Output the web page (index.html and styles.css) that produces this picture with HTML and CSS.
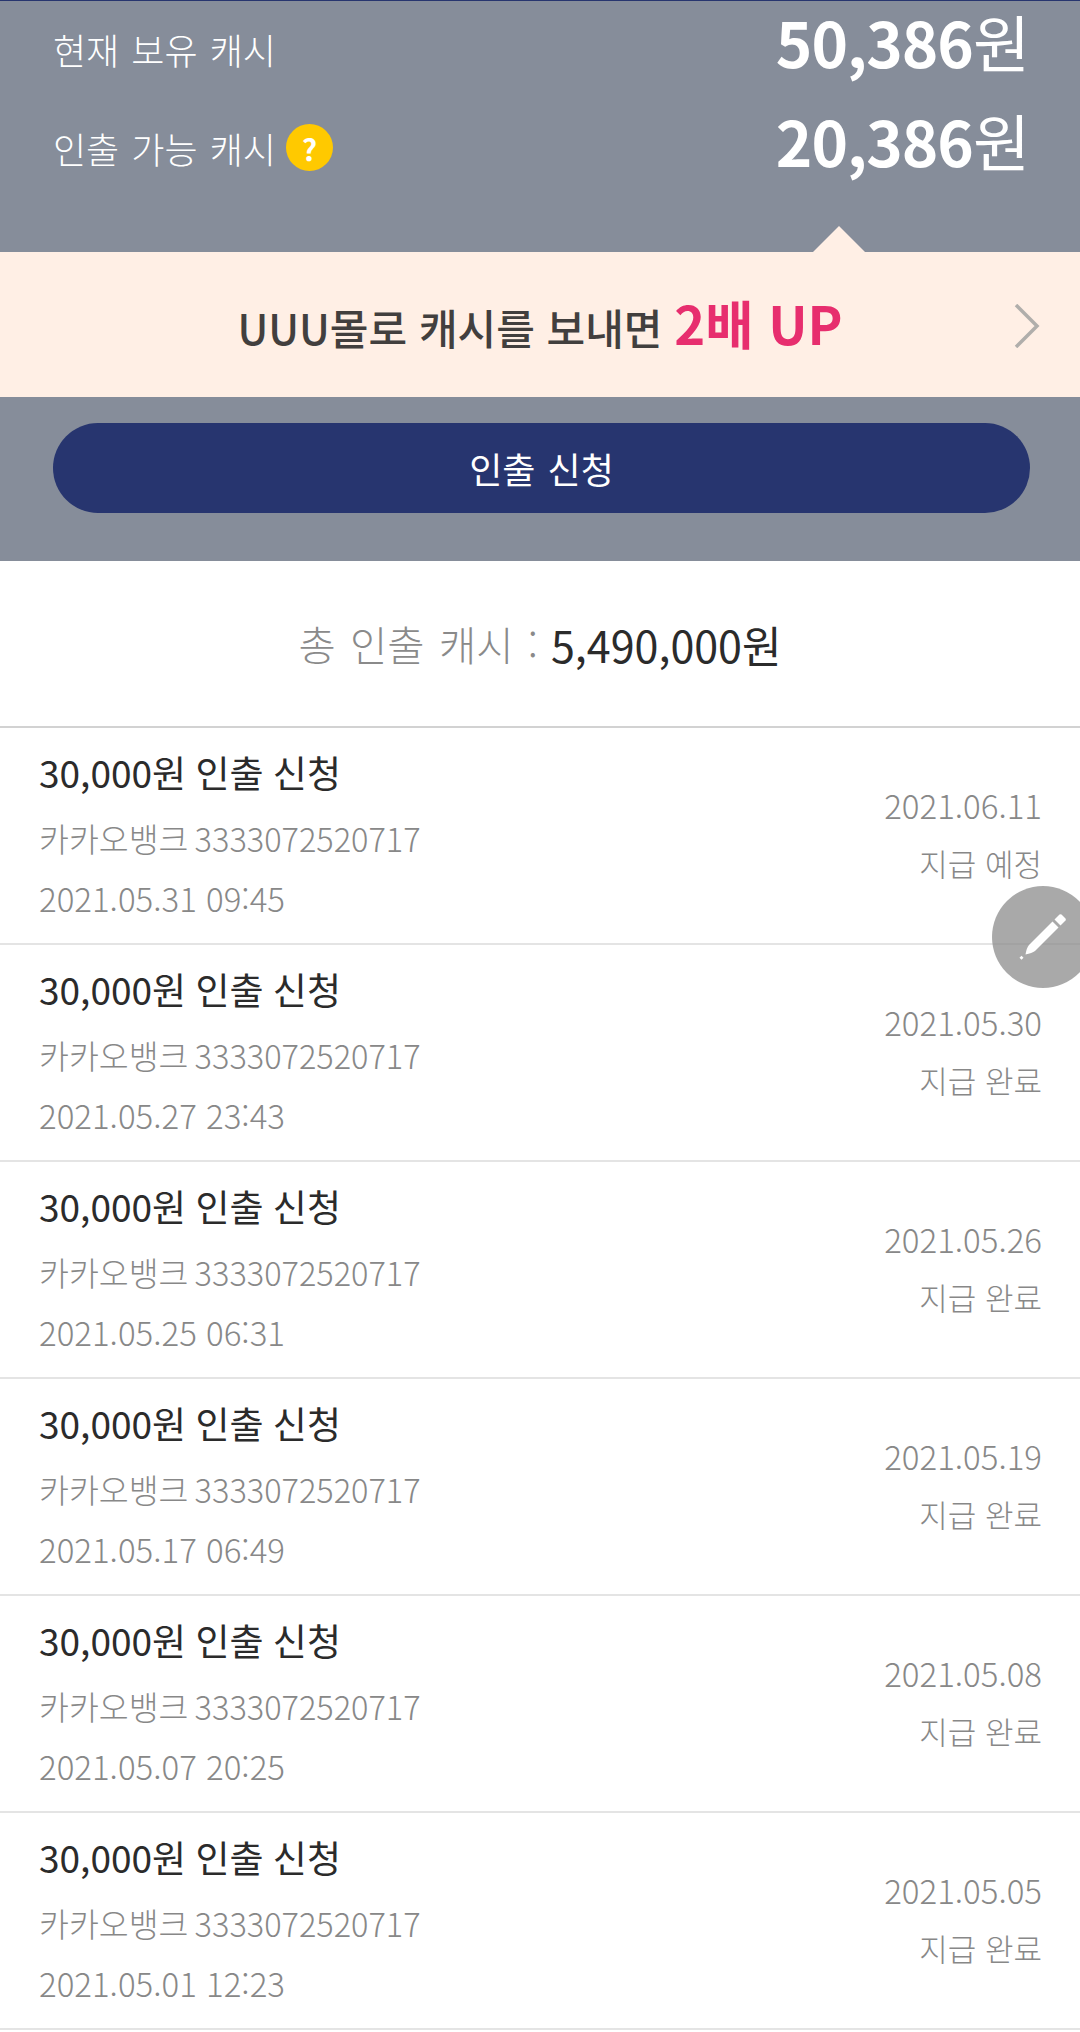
FILE: index.html
```html
<!DOCTYPE html>
<html lang="ko">
<head>
    <meta charset="UTF-8">
    <meta name="viewport" content="width=device-width, initial-scale=1.0">
    <title>인출 신청</title>
    <link rel="stylesheet" href="styles.css">
</head>
<body>

    <!-- Cash summary -->
    <section class="summary">
        <div class="balance-row">
            <span class="balance-label">현재 보유 캐시</span>
            <strong class="balance-value">50,386<span class="won">원</span></strong>
        </div>
        <div class="balance-row">
            <span class="balance-label">인출 가능 캐시 <span class="help">?</span></span>
            <strong class="balance-value">20,386<span class="won">원</span></strong>
        </div>
    </section>

    <!-- Promo banner -->
    <a class="promo">
        <span class="promo-text">UUU몰로 캐시를 보내면 <em>2배 UP</em></span>
        <svg class="promo-arrow" width="26" height="44" viewBox="0 0 26 44">
            <path d="M2 1 L23 22 L2 43" fill="none" stroke="#b0aeab" stroke-width="3.500"/>
        </svg>
    </a>

    <div class="request-bar">
        <button class="request-button">인출 신청</button>
    </div>

    <div class="total">총 인출 캐시 : <strong>5,490,000원</strong></div>

    <!-- Withdrawal list -->
    <ul class="history">
        <li class="history-item">
            <div class="history-main">
                <p class="history-title">30,000원 인출 신청</p>
                <p class="history-bank">카카오뱅크 3333072520717</p>
                <p class="history-time">2021.05.31 09:45</p>
            </div>
            <div class="history-side">
                <p>2021.06.11</p>
                <p class="history-status">지급 예정</p>
            </div>
        </li>
        <li class="history-item">
            <div class="history-main">
                <p class="history-title">30,000원 인출 신청</p>
                <p class="history-bank">카카오뱅크 3333072520717</p>
                <p class="history-time">2021.05.27 23:43</p>
            </div>
            <div class="history-side">
                <p>2021.05.30</p>
                <p class="history-status">지급 완료</p>
            </div>
        </li>
        <li class="history-item">
            <div class="history-main">
                <p class="history-title">30,000원 인출 신청</p>
                <p class="history-bank">카카오뱅크 3333072520717</p>
                <p class="history-time">2021.05.25 06:31</p>
            </div>
            <div class="history-side">
                <p>2021.05.26</p>
                <p class="history-status">지급 완료</p>
            </div>
        </li>
        <li class="history-item">
            <div class="history-main">
                <p class="history-title">30,000원 인출 신청</p>
                <p class="history-bank">카카오뱅크 3333072520717</p>
                <p class="history-time">2021.05.17 06:49</p>
            </div>
            <div class="history-side">
                <p>2021.05.19</p>
                <p class="history-status">지급 완료</p>
            </div>
        </li>
        <li class="history-item">
            <div class="history-main">
                <p class="history-title">30,000원 인출 신청</p>
                <p class="history-bank">카카오뱅크 3333072520717</p>
                <p class="history-time">2021.05.07 20:25</p>
            </div>
            <div class="history-side">
                <p>2021.05.08</p>
                <p class="history-status">지급 완료</p>
            </div>
        </li>
        <li class="history-item">
            <div class="history-main">
                <p class="history-title">30,000원 인출 신청</p>
                <p class="history-bank">카카오뱅크 3333072520717</p>
                <p class="history-time">2021.05.01 12:23</p>
            </div>
            <div class="history-side">
                <p>2021.05.05</p>
                <p class="history-status">지급 완료</p>
            </div>
        </li>
    </ul>

    <!-- Floating write button -->
    <button class="fab">
        <svg width="54" height="54" viewBox="56 50 54 54">
            <path d="M94.500 59.500 L99.500 54.500 Q100.500 53.800 101.500 54.500 L105.500 58.500 Q106.200 59.500 105.500 60.500 L100.500 65.500 Z" fill="#fff"/>
            <path d="M92.500 61.500 L98.500 67.500 L75 91 Q72 93 65.500 94.500 Q66.500 88 69 85 Z" fill="#fff"/>
            <path d="M59.500 97.700 L61.500 95.700 L63.500 97.700 L61.500 99.700 Z" fill="#fff"/>
        </svg>
    </button>

</body>
</html>
```

FILE: styles.css
```css
/* General Style */
* {
    box-sizing: border-box;
}
html, body {
    height: 2032px;
    overflow: hidden;
}
body {
    position: relative;
    margin: 0;
    background-color: #ffffff;
    color: #2b2b2b;
    font-family: "Noto Sans CJK KR", "Noto Sans", sans-serif;
}
p {
    margin: 0;
}

/* Summary */
.summary {
    display: flex;
    flex-direction: column;
    gap: 6px;
    height: 252px;
    padding: 1px 51px 0 53px;
    background-color: #868d9a;
    border-top: 1px solid #27356f;
    color: #ffffff;
}
.balance-row {
    display: flex;
    justify-content: space-between;
    align-items: center;
    height: 93px;
}
.balance-label {
    display: flex;
    align-items: center;
    gap: 10px;
    font-size: 36px;
    font-weight: 300;
    word-spacing: 2px;
}
.balance-value {
    padding-bottom: 15px;
    font-size: 62px;
    font-weight: 700;
    letter-spacing: -1px;
    line-height: 1;
}
.won {
    font-weight: 400;
}
.help {
    display: flex;
    align-items: center;
    justify-content: center;
    width: 47px;
    height: 47px;
    border-radius: 50%;
    background-color: #ffc900;
    color: #ffffff;
    font-size: 30px;
    font-weight: 700;
}

/* Promo */
.promo {
    position: relative;
    display: flex;
    align-items: center;
    justify-content: center;
    height: 145px;
    padding-bottom: 6px;
    background-color: #ffefe5;
}
.promo::before {
    content: "";
    position: absolute;
    top: -26px;
    left: 813px;
    border-left: 26px solid transparent;
    border-right: 26px solid transparent;
    border-bottom: 26px solid #ffefe5;
}
.promo-text {
    font-size: 42px;
    font-weight: 500;
    color: #423f3e;
}
.promo-text em {
    font-style: normal;
    font-weight: 700;
    font-size: 52.500px;
    color: #e72e6e;
}
.promo-arrow {
    position: absolute;
    top: 52px;
    right: 40px;
}

/* Request button */
.request-bar {
    height: 164px;
    padding: 26px 50px 0 53px;
    background-color: #868d9a;
}
.request-button {
    display: block;
    width: 100%;
    height: 90px;
    border: none;
    border-radius: 45px;
    background-color: #27356f;
    color: #ffffff;
    font-family: inherit;
    font-size: 36px;
    word-spacing: 2px;
}

/* Total */
.total {
    display: flex;
    align-items: center;
    justify-content: center;
    gap: 13px;
    height: 167px;
    border-bottom: 2px solid #d2d2d2;
    color: #8a8a8a;
    font-size: 40.500px;
    font-weight: 300;
    word-spacing: 3px;
}
.total strong {
    color: #2b2b2b;
    font-size: 43px;
    font-weight: 400;
}

/* History */
.history {
    margin: 0;
    padding: 0;
    list-style: none;
}
.history-item {
    display: flex;
    justify-content: space-between;
    height: 217px;
    padding: 13px 38px 0 39px;
    border-bottom: 2px solid #e4e4e4;
}
.history-title {
    height: 66px;
    font-size: 37px;
    line-height: 62px;
    word-spacing: -1px;
}
.history-bank {
    height: 61px;
    color: #888888;
    font-size: 32.500px;
    font-weight: 300;
    line-height: 61px;
    word-spacing: -3px;
}
.history-time {
    height: 61px;
    color: #888888;
    font-size: 33px;
    font-weight: 300;
    line-height: 61px;
}
.history-side {
    padding-top: 36px;
    color: #888888;
    font-size: 33px;
    font-weight: 300;
    line-height: 57px;
    text-align: right;
}
.history-status {
    font-size: 31px;
}

/* Floating button */
.fab {
    position: absolute;
    top: 886px;
    left: 992px;
    display: flex;
    align-items: center;
    justify-content: center;
    width: 102px;
    height: 102px;
    padding: 0;
    border: none;
    border-radius: 50%;
    background-color: rgba(140, 140, 140, 0.75);
}
```
